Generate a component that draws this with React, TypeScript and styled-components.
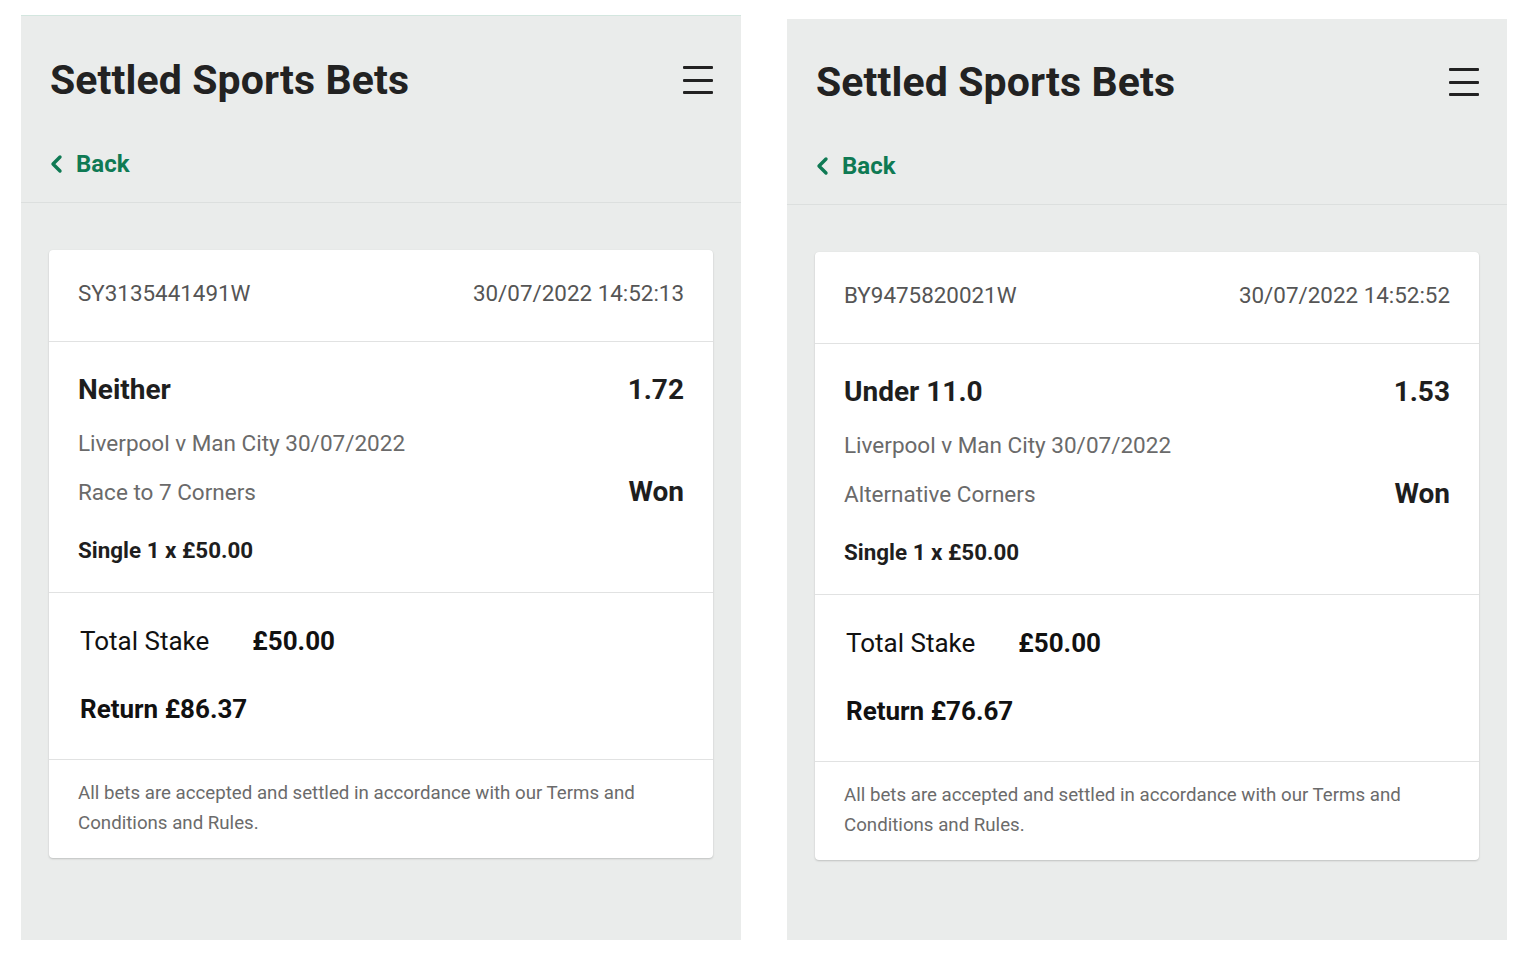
import React from "react";
import styled, { createGlobalStyle } from "styled-components";

const Global = createGlobalStyle`
  html, body { margin: 0; padding: 0; background: #ffffff; }
  body { font-family: Roboto, "Noto Sans", Arial, sans-serif; -webkit-font-smoothing: antialiased; }
  * { box-sizing: border-box; }
`;

const Page = styled.div`
  display: flex;
  align-items: flex-start;
  gap: 46px;
  padding-left: 21px;
  width: 1537px;
  height: 963px;
  overflow: hidden;
`;

const Panel = styled.section<{ $mt: number; $h: number; $topLine?: boolean }>`
  width: 720px;
  height: ${(p) => p.$h}px;
  margin-top: ${(p) => p.$mt}px;
  background: #eaeceb;
  border-top: 1px solid ${(p) => (p.$topLine ? "#d3e6df" : "#eaeceb")};
  display: flex;
  flex-direction: column;
`;

const Header = styled.header<{ $pt: number }>`
  padding: ${(p) => p.$pt}px 28px 23px 29px;
  border-bottom: 1px solid #dcdfde;
  display: flex;
  flex-direction: column;
  gap: 46px;
`;

const TitleRow = styled.div`
  display: flex;
  align-items: center;
  justify-content: space-between;
  height: 48px;
`;

const Title = styled.h1`
  margin: 0;
  font-size: 41px;
  line-height: 48px;
  font-weight: 700;
  color: #222222;
  letter-spacing: 0.1px;
  transform: translateY(1px);
`;

const Burger = styled.button`
  width: 30px;
  height: 28px;
  padding: 0;
  border: 0;
  background: transparent;
  display: flex;
  flex-direction: column;
  justify-content: space-between;
  margin-top: 2px;
  span {
    display: block;
    height: 3px;
    background: #222;
    border-radius: 1px;
  }
`;

const BackLink = styled.a`
  display: flex;
  align-items: center;
  gap: 13px;
  height: 30px;
  color: #0f7a54;
  font-size: 24px;
  font-weight: 700;
  text-decoration: none;
  svg { display: block; }
`;

const Body = styled.div`
  padding: 47px 28px 0 28px;
`;

const Card = styled.article`
  background: #ffffff;
  border-radius: 4px;
  box-shadow: 0 1px 2px rgba(0, 0, 0, 0.18), 0 0 1px rgba(0, 0, 0, 0.06);
`;

const Section = styled.div<{ $pt: number; $pb: number; $pl?: number }>`
  padding: ${(p) => p.$pt}px 29px ${(p) => p.$pb}px ${(p) => p.$pl ?? 29}px;
  border-bottom: 1px solid #e1e2e2;
  &:last-child { border-bottom: 0; }
`;

const Row = styled.div<{ $mt?: number; $lh: number }>`
  display: flex;
  align-items: center;
  justify-content: space-between;
  margin-top: ${(p) => p.$mt ?? 0}px;
  line-height: ${(p) => p.$lh}px;
`;

const Meta = styled.span`
  font-size: 22.4px;
  color: #555555;
`;

const Strong = styled.span<{ $size: number }>`
  font-size: ${(p) => p.$size}px;
  font-weight: 700;
  color: #1e1e1e;
`;

const Muted = styled.span`
  font-size: 22.5px;
  color: #6a6a6a;
`;

const StakeRow = styled.div<{ $mt?: number }>`
  display: flex;
  align-items: center;
  gap: 43px;
  line-height: 32px;
  margin-top: ${(p) => p.$mt ?? 0}px;
`;

const StakeLabel = styled.span`
  font-size: 26px;
  color: #111;
`;

const StakeValue = styled.span`
  font-size: 26px;
  font-weight: 700;
  color: #111;
`;

const Footnote = styled.p`
  margin: 0;
  font-size: 18.7px;
  line-height: 30px;
  color: #6b6b6b;
`;

type Bet = {
  ref: string;
  date: string;
  selection: string;
  odds: string;
  event: string;
  market: string;
  stake: string;
  returns: string;
};

const bets: { bet: Bet; mt: number; h: number; topLine: boolean; pt: number }[] = [
  {
    bet: {
      ref: "SY3135441491W",
      date: "30/07/2022 14:52:13",
      selection: "Neither",
      odds: "1.72",
      event: "Liverpool v Man City 30/07/2022",
      market: "Race to 7 Corners",
      stake: "£50.00",
      returns: "£86.37",
    },
    mt: 15,
    h: 925,
    topLine: true,
    pt: 39,
  },
  {
    bet: {
      ref: "BY9475820021W",
      date: "30/07/2022 14:52:52",
      selection: "Under 11.0",
      odds: "1.53",
      event: "Liverpool v Man City 30/07/2022",
      market: "Alternative Corners",
      stake: "£50.00",
      returns: "£76.67",
    },
    mt: 19,
    h: 921,
    topLine: false,
    pt: 37,
  },
];

const Chevron = () => (
  <svg width="13" height="20" viewBox="0 0 13 20" aria-hidden="true">
    <path d="M10 3 L3 10 L10 17" fill="none" stroke="#0f7a54" strokeWidth="3.4" strokeLinecap="round" strokeLinejoin="round" />
  </svg>
);

function BetPanel({ bet, mt, h, topLine, pt }: { bet: Bet; mt: number; h: number; topLine: boolean; pt: number }) {
  return (
    <Panel $mt={mt} $h={h} $topLine={topLine}>
      <Header $pt={pt}>
        <TitleRow>
          <Title>Settled Sports Bets</Title>
          <Burger aria-label="Menu">
            <span />
            <span />
            <span />
          </Burger>
        </TitleRow>
        <BackLink href="#">
          <Chevron />
          Back
        </BackLink>
      </Header>
      <Body>
        <Card>
          <Section $pt={30} $pb={35}>
            <Row $lh={26}>
              <Meta>{bet.ref}</Meta>
              <Meta>{bet.date}</Meta>
            </Row>
          </Section>
          <Section $pt={31} $pb={27}>
            <Row $lh={34}>
              <Strong $size={28}>{bet.selection}</Strong>
              <Strong $size={28}>{bet.odds}</Strong>
            </Row>
            <Row $lh={30} $mt={21}>
              <Muted>{bet.event}</Muted>
            </Row>
            <Row $lh={30} $mt={19}>
              <Muted>{bet.market}</Muted>
              <Strong $size={28}>Won</Strong>
            </Row>
            <Row $lh={30} $mt={28}>
              <Strong $size={22.4}>Single 1 x {bet.stake}</Strong>
            </Row>
          </Section>
          <Section $pt={32} $pb={34} $pl={31}>
            <StakeRow>
              <StakeLabel>Total Stake</StakeLabel>
              <StakeValue>{bet.stake}</StakeValue>
            </StakeRow>
            <StakeRow $mt={36}>
              <StakeValue>Return {bet.returns}</StakeValue>
            </StakeRow>
          </Section>
          <Section $pt={18} $pb={20}>
            <Footnote>
              All bets are accepted and settled in accordance with our Terms and Conditions and Rules.
            </Footnote>
          </Section>
        </Card>
      </Body>
    </Panel>
  );
}

export default function App() {
  return (
    <>
      <Global />
      <Page>
        {bets.map((b) => (
          <BetPanel key={b.bet.ref} {...b} />
        ))}
      </Page>
    </>
  );
}
